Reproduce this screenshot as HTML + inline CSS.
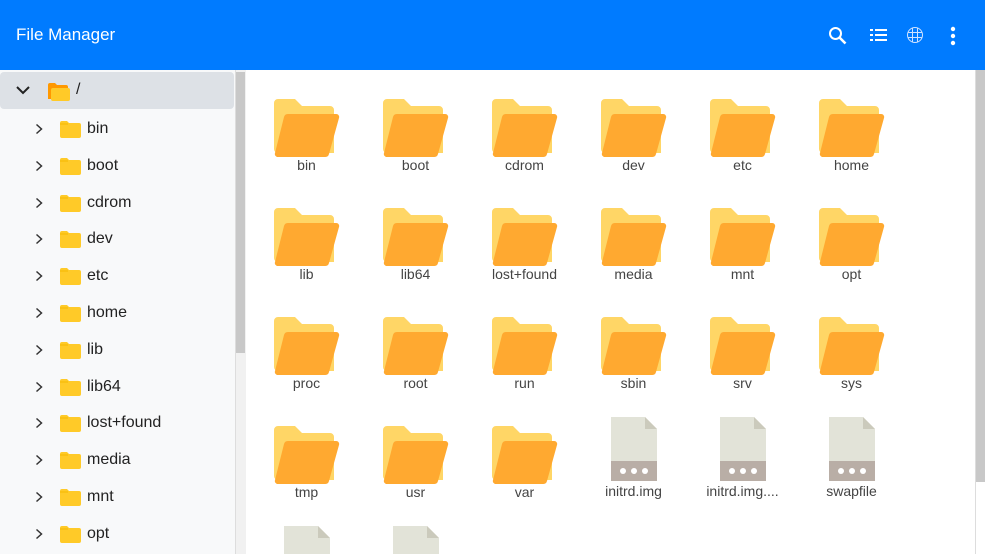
<!DOCTYPE html>
<html><head><meta charset="utf-8"><style>
*{box-sizing:border-box;margin:0;padding:0}
html,body{width:985px;height:554px;overflow:hidden}
body{font-family:"Liberation Sans",sans-serif;background:#fff;position:relative}
.hdr{position:absolute;left:0;top:0;width:985px;height:70px;background:#007bff;color:#fff}
.hdr .t{position:absolute;left:16px;top:25px;font-size:17px}
.side{position:absolute;left:0;top:70px;width:235px;height:484px;background:#f8f9fa;overflow:hidden}
.sb1{position:absolute;left:235px;top:70px;width:11px;height:484px;background:#f1f1f1;border-left:1px solid #ddd}
.sb1 i{position:absolute;left:0;top:2px;width:9px;height:281px;background:#c8c8c8}
.sb2{position:absolute;left:975px;top:70px;width:10px;height:484px;background:#fff;border-left:1px solid #ddd}
.sb2 i{position:absolute;left:0;top:0;width:9px;height:412px;background:#c8c8c8}
.root{position:absolute;left:0;top:2px;width:234px;height:37px;background:#dde1e6;border-radius:4px}
.row{position:absolute;left:0;height:37px;width:234px;font-size:16px;color:#222}
.row .n{position:absolute;left:87px;top:11px}
.row .c{position:absolute;left:33px;top:11px}
.row .f{position:absolute;left:60px;top:12px}
#main{position:absolute;left:0;top:0;width:975px;height:554px;overflow:hidden}
.item{position:absolute;width:109px;text-align:center;font-size:14px;color:#444}
.item svg{display:block;margin:0 auto}
.item span{display:block;margin-top:0}
</style></head><body>
<div class="hdr"><div class="t">File Manager</div>
<svg style="position:absolute;left:828px;top:26px" width="20" height="20" viewBox="0 0 20 20"><circle cx="7.5" cy="7.5" r="5.5" fill="none" stroke="#fff" stroke-width="2"/><path d="M11.5 11.5L17.5 17.5" stroke="#fff" stroke-width="2.6"/></svg>
<svg style="position:absolute;left:870px;top:28px" width="18" height="14" viewBox="0 0 18 14"><g fill="#fff"><rect x="0" y="1" width="3" height="2"/><rect x="5" y="1" width="12" height="2"/><rect x="0" y="6" width="3" height="2"/><rect x="5" y="6" width="12" height="2"/><rect x="0" y="11" width="3" height="2"/><rect x="5" y="11" width="12" height="2"/></g></svg>
<svg style="position:absolute;left:906px;top:26px" width="18" height="18" viewBox="0 0 18 18"><g fill="none" stroke="#cfe2ff" stroke-width="1"><circle cx="9" cy="9" r="7.5"/><path d="M1.5 6.5h15M1.5 11.5h15M6.5 1.5v15M11.5 1.5v15"/></g></svg>
<svg style="position:absolute;left:949px;top:26px" width="8" height="20" viewBox="0 0 8 20"><g fill="#fff"><circle cx="4" cy="3" r="2.2"/><circle cx="4" cy="10" r="2.2"/><circle cx="4" cy="17" r="2.2"/></g></svg>
</div>
<div class="side">
<div class="root"></div>
<div class="row" style="top:2px"><svg class="c" style="left:15px;top:13px" width="16" height="10" viewBox="0 0 16 10"><path d="M2 2l6 6 6-6" fill="none" stroke="#222" stroke-width="2"/></svg>
<svg class="f" style="left:48px;top:11px" width="22" height="18" viewBox="0 0 22 18"><path d="M0 2a2 2 0 0 1 2-2h5l2 2h9a2 2 0 0 1 2 2v12H0z" fill="#ff9800"/><rect x="3" y="5" width="19" height="13" rx="2" fill="#ffca28"/></svg><span class="n" style="left:76px;top:9px">/</span></div>
</div>
<div class="sb1"><i></i></div>
<div class="sb2"><i></i></div>
<div id="main"></div>
<script>
var side=document.querySelector('.side');
var names=["bin","boot","cdrom","dev","etc","home","lib","lib64","lost+found","media","mnt","opt","proc"];
var h='';
names.forEach(function(n,i){var t=39+i*36.8;
h+='<div class="row" style="top:'+t+'px"><svg class="c" style="left:35px;top:14px" width="8" height="12" viewBox="0 0 8 12"><path d="M1.5 1.5l5 4.5-5 4.5" fill="none" stroke="#333" stroke-width="1.5"/></svg><svg class="f" width="21" height="17" viewBox="0 0 21 17"><path d="M0 2a2 2 0 0 1 2-2h5l2 2h10a2 2 0 0 1 2 2v11a2 2 0 0 1-2 2H2a2 2 0 0 1-2-2z" fill="#ffca28"/><path d="M0 3h8" stroke="#f5b800" stroke-width="1"/></svg><span class="n">'+n+'</span></div>';});
side.insertAdjacentHTML('beforeend',h);
var folder='<svg width="66" height="58" viewBox="0 0 66 58"><path d="M0 4a4 4 0 0 1 4-4h17l7 7h28a4 4 0 0 1 4 4v43H4a4 4 0 0 1-4-4z" fill="#ffd666"/><path d="M10 18a4 4 0 0 1 4-3h48a3 3 0 0 1 3 4l-10 36a4 4 0 0 1-4 3H4a3 3 0 0 1-3-4z" fill="#ffa930"/></svg>';
var file='<svg width="46" height="64" viewBox="0 0 46 64"><path d="M0 0h34l12 12v53H0z" fill="#e2e3d8"/><path d="M34 0v12h12z" fill="#cbcabc"/><rect x="0" y="44" width="46" height="20" fill="#b9aea6"/><g fill="#fff"><circle cx="12" cy="54" r="3"/><circle cx="23" cy="54" r="3"/><circle cx="34" cy="54" r="3"/></g></svg>';
var items=["bin","boot","cdrom","dev","etc","home","lib","lib64","lost+found","media","mnt","opt","proc","root","run","sbin","srv","sys","tmp","usr","var","*initrd.img","*initrd.img....","*swapfile","*","*"];
var m='';
items.forEach(function(n,i){var c=i%6,r=Math.floor(i/6);var x=252+c*109,y=99+r*109;
var isf=n[0]=='*';if(isf)n=n.slice(1);
if(isf) m+='<div class="item" style="left:'+x+'px;top:'+(y-9)+'px">'+file+'<span style="margin-top:2px">'+n+'</span></div>';
else m+='<div class="item" style="left:'+x+'px;top:'+y+'px">'+folder+'<span>'+n+'</span></div>';});
document.getElementById('main').innerHTML=m;
</script>
</body></html>
